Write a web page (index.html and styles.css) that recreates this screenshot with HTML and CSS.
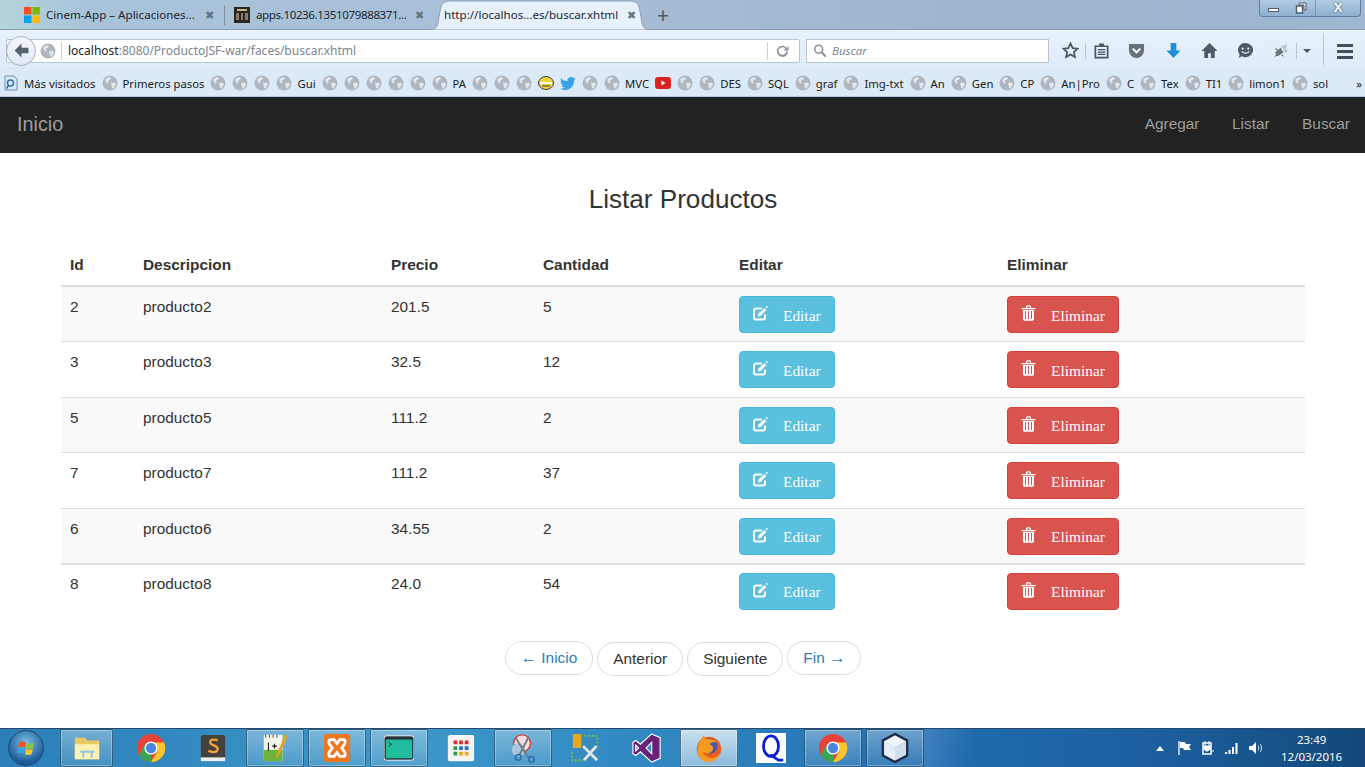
FILE: index.html
```html
<!DOCTYPE html>
<html lang="en">
<head>
    <meta charset="UTF-8">
    <meta name="viewport" content="width=device-width, initial-scale=1.0">
    <title>Listar Productos</title>
    <link rel="stylesheet" href="styles.css">
</head>
<body>
    <svg class="defs" width="0" height="0">
        <symbol id="globe" viewBox="0 0 16 16">
            <circle cx="8" cy="8" r="7.5" fill="#aeb6c0"/>
            <path d="M3 4.5 6.5 2l2.5 1-1 2-2 .5.5 2.5-1.5.5-1-1.5zM9 8l3.5-.5 1.5 2-2.5 4-1.5-.5-.5-3z" fill="#e3e7ec"/>
        </symbol>
        <symbol id="chrome" viewBox="0 0 32 32">
            <circle cx="16" cy="16" r="15" fill="#e8433a"/>
            <path d="M16 16 3 23.500A15 15 0 0 1 3 8.500z" fill="#e8433a"/>
            <path d="M16 16 16 31A15 15 0 0 1 3 23.500L9 13z" fill="#3aa655"/>
            <path d="M16 10H30A15 15 0 0 1 16 31L23 19z" fill="#fbc62e"/>
            <circle cx="16" cy="16" r="7" fill="#fff"/>
            <circle cx="16" cy="16" r="5.500" fill="#4a86e0"/>
        </symbol>
        <symbol id="edit" viewBox="0 0 15 16">
            <path d="M12 9.500v3a2 2 0 0 1-2 2H3a2 2 0 0 1-2-2v-7a2 2 0 0 1 2-2h6" fill="none" stroke="#fff" stroke-width="2"/>
            <path d="M5 11.500 5.500 8.500 11.500 3 13.500 5 7.500 11z" fill="#fff"/>
            <path d="M12.500 1.500 13.500 .8 15 2.300 14.300 3.300z" fill="#fff"/>
        </symbol>
        <symbol id="trash" viewBox="0 0 14 16">
            <path d="M0 3h14v1.300H0zM4.500 3V1.200L5.500.3h3l1 .9V3H8.300V1.500H5.700V3z" fill="#fff"/>
            <path d="M1.500 5h11v9.500l-1 1.200h-9l-1-1.200zM3.500 6v8h1V6zm3 0v8h1V6zm3 0v8h1V6z" fill="#fff" fill-rule="evenodd"/>
        </symbol>
    </svg>

    <div class="screen">
        <div class="tabbar">
            <div class="tab tab-first">
                <svg class="tab-icon" viewBox="0 0 16 16"><path fill="#f25022" d="M0 0h7.500v7.500H0z"/><path fill="#7fba00" d="M8.500 0H16v7.500H8.500z"/><path fill="#00a4ef" d="M0 8.500h7.500V16H0z"/><path fill="#ffb900" d="M8.500 8.500H16V16H8.500z"/></svg>
                <span class="tab-title">Cinem-App – Aplicaciones...</span>
                <span class="tab-close">✖</span>
            </div>
            <div class="tab tab-second">
                <svg class="tab-icon" viewBox="0 0 16 16"><path fill="#2c2622" d="M0 0h16v16H0z"/><path fill="#8a7a66" d="M2 6h3v7H2zM7 6h2v7H7zM11 6h3v7h-3z"/><path fill="#c9b48f" d="M3 2h10v2H3z"/></svg>
                <span class="tab-title">apps.10236.1351079888371...</span>
                <span class="tab-close">✖</span>
            </div>
            <div class="tab tab-active">
                <svg class="tab-shape" viewBox="0 0 228 30" preserveAspectRatio="none"><path d="M0 30C8 30 9 26 10 18L12 8C13 3 16 1 22 1H206C212 1 215 3 216 8L218 18C219 26 220 30 228 30z" fill="#e7f1fb" stroke="#8d9cab"/></svg>
                <span class="tab-title">http://localhos...es/buscar.xhtml</span>
                <span class="tab-close">✖</span>
            </div>
            <span class="tab-new">+</span>
            <div class="win-controls">
                <span class="win-btn win-min"><i></i></span>
                <span class="win-btn win-max">
                    <svg viewBox="0 0 12 12"><path d="M4 1h7v7H9V3H4z" fill="#fff" stroke="#4c5d70"/><path d="M1.500 4h6v7h-6z" fill="#fff" stroke="#4c5d70" stroke-width="1.400"/></svg>
                </span>
                <span class="win-btn win-close">X</span>
            </div>
        </div>

        <div class="toolbar">
            <div class="urlbar">
                <span class="back-btn">
                    <svg viewBox="0 0 16 16"><path d="M8 1.500 1.500 8 8 14.500V10.500h6.500v-5H8z" fill="#55626f"/></svg>
                </span>
                <svg class="globe url-globe"><use href="#globe"/></svg>
                <span class="url-text"><b>localhost</b>:8080/ProductoJSF-war/faces/buscar.xhtml</span>
                <span class="reload">
                    <svg viewBox="0 0 16 16"><path d="M13 5.500A6 6 0 1 0 14 9h-2.200A4 4 0 1 1 11 6.200L9 8h5.500V2.500z" fill="#8d96a0"/></svg>
                </span>
            </div>
            <div class="searchbar">
                <svg class="search-icon" viewBox="0 0 16 16"><circle cx="6.500" cy="6.500" r="4.500" fill="none" stroke="#8a929b" stroke-width="1.800"/><path d="m10 10 4.500 5" stroke="#8a929b" stroke-width="2.400"/></svg>
                <span class="search-text">Buscar</span>
            </div>
            <div class="tools">
                <svg class="tool tool-star" viewBox="0 0 18 18"><path d="m9 1.500 2.300 5 5.200.6-3.900 3.600 1.100 5.300L9 13.300 4.300 16l1.100-5.300L1.500 7.100l5.200-.6z" fill="none" stroke="#4a5561" stroke-width="1.800"/></svg>
                <i class="tool-sep sep-star"></i>
                <svg class="tool tool-clip" viewBox="0 0 18 18"><path d="M2.500 4.500h13v12h-13z" fill="none" stroke="#4a5561" stroke-width="1.800"/><path d="M6.500 1.500h5v3h-5zM5 7.500h8v1.300H5zM5 10h8v1.300H5zM5 12.500h8v1.300H5z" fill="#4a5561"/></svg>
                <svg class="tool tool-pocket" viewBox="0 0 18 18"><path d="M1 2h16v7a8 8 0 0 1-16 0z" fill="#66717d"/><path d="m5 7 4 4 4-4" fill="none" stroke="#fff" stroke-width="2.200"/></svg>
                <svg class="tool tool-down" viewBox="0 0 18 18"><path d="M6 1h6v8h4.500L9 17 1.500 9H6z" fill="#1c8fdc"/></svg>
                <svg class="tool tool-home" viewBox="0 0 18 18"><path d="M9 1 .5 9.500h3V17h4v-5h3v5h4V9.500h3z" fill="#4f5a66"/></svg>
                <svg class="tool tool-smile" viewBox="0 0 18 18"><path d="M9 1a8 7.500 0 1 1-4 14l-3 2 .8-3.800A7.500 7.500 0 0 1 9 1z" fill="#4f5a66"/><circle cx="6" cy="7" r="1.200" fill="#e6f0fa"/><circle cx="12" cy="7" r="1.200" fill="#e6f0fa"/><path d="M5 10c2 2.500 6 2.500 8 0" fill="none" stroke="#e6f0fa" stroke-width="1.300"/></svg>
                <svg class="tool tool-bee" viewBox="0 0 18 18"><path d="M2 11 8 6l3 5-6 4z" fill="#6d757f"/><path d="m8 5 7-3-2 7zM10 9l6-1-2 4z" fill="#bcc5ce"/><path d="M1 16l3-3 1 1zM4 9 2 6l3 2zM10 13l1 3-2-2z" fill="#4b535c"/></svg>
                <i class="tool-sep sep-bee"></i>
                <i class="tool-caret"></i>
                <i class="tool-sep sep-menu"></i>
                <span class="tool-menu"><i></i><i></i><i></i></span>
            </div>
        </div>

        <div class="bookmarks">
            <svg class="bm-folder" viewBox="0 0 16 16"><path d="M2 1h9l3 3v11H2z" fill="#d9e9f7" stroke="#6d93b8"/><circle cx="7.500" cy="8" r="3" fill="none" stroke="#2f6fb0" stroke-width="1.500"/><path d="m5.500 10.500-2 3" stroke="#2f6fb0" stroke-width="1.600"/></svg>
            <span class="bm-label bm-first">Más visitados</span>
            <span class="bm"><svg class="globe"><use href="#globe"/></svg>Primeros pasos</span>
            <span class="bm"><svg class="globe"><use href="#globe"/></svg></span>
            <span class="bm"><svg class="globe"><use href="#globe"/></svg></span>
            <span class="bm"><svg class="globe"><use href="#globe"/></svg></span>
            <span class="bm"><svg class="globe"><use href="#globe"/></svg>Gui</span>
            <span class="bm"><svg class="globe"><use href="#globe"/></svg></span>
            <span class="bm"><svg class="globe"><use href="#globe"/></svg></span>
            <span class="bm"><svg class="globe"><use href="#globe"/></svg></span>
            <span class="bm"><svg class="globe"><use href="#globe"/></svg></span>
            <span class="bm"><svg class="globe"><use href="#globe"/></svg></span>
            <span class="bm"><svg class="globe"><use href="#globe"/></svg>PA</span>
            <span class="bm"><svg class="globe"><use href="#globe"/></svg></span>
            <span class="bm"><svg class="globe"><use href="#globe"/></svg></span>
            <span class="bm"><svg class="globe"><use href="#globe"/></svg></span>
            <span class="bm"><svg class="globe" viewBox="0 0 16 16"><ellipse cx="8" cy="8" rx="7.500" ry="6.500" fill="#f1d13c" stroke="#39424d"/><path d="M2 7h12v2H2z" fill="#fff"/><path d="M4 11h8" stroke="#39424d"/></svg></span>
            <span class="bm"><svg class="globe" viewBox="0 0 16 16"><path d="M15.500 3.500c-.6.300-1.200.4-1.800.5.700-.4 1.100-1 1.400-1.700-.6.400-1.300.6-2 .8a3.200 3.200 0 0 0-5.500 2.900C5 6.400 2.700 5.200 1.100 3.200c-.8 1.500-.4 3.300 1 4.300-.5 0-1-.2-1.400-.4 0 1.600 1.100 2.900 2.600 3.200-.5.100-1 .2-1.500.1.400 1.300 1.600 2.200 3 2.200A6.500 6.500 0 0 1 0 13.500 9.100 9.100 0 0 0 14.100 5.400c.6-.5 1-1.100 1.400-1.900z" fill="#35a2ea"/></svg></span>
            <span class="bm"><svg class="globe"><use href="#globe"/></svg></span>
            <span class="bm"><svg class="globe"><use href="#globe"/></svg>MVC</span>
            <span class="bm"><svg class="globe" viewBox="0 0 16 16"><rect y="2" width="16" height="12" rx="3" fill="#d9231f"/><path d="m6.500 5.500 4 2.500-4 2.500z" fill="#fff"/></svg></span>
            <span class="bm"><svg class="globe"><use href="#globe"/></svg></span>
            <span class="bm"><svg class="globe"><use href="#globe"/></svg>DES</span>
            <span class="bm"><svg class="globe"><use href="#globe"/></svg>SQL</span>
            <span class="bm"><svg class="globe"><use href="#globe"/></svg>graf</span>
            <span class="bm"><svg class="globe"><use href="#globe"/></svg>Img-txt</span>
            <span class="bm"><svg class="globe"><use href="#globe"/></svg>An</span>
            <span class="bm"><svg class="globe"><use href="#globe"/></svg>Gen</span>
            <span class="bm"><svg class="globe"><use href="#globe"/></svg>CP</span>
            <span class="bm"><svg class="globe"><use href="#globe"/></svg>An|Pro</span>
            <span class="bm"><svg class="globe"><use href="#globe"/></svg>C</span>
            <span class="bm"><svg class="globe"><use href="#globe"/></svg>Tex</span>
            <span class="bm"><svg class="globe"><use href="#globe"/></svg>TI1</span>
            <span class="bm"><svg class="globe"><use href="#globe"/></svg>limon1</span>
            <span class="bm"><svg class="globe"><use href="#globe"/></svg>sol</span>
            <span class="bm-more">»</span>
        </div>

        <nav class="navbar">
            <a class="brand">Inicio</a>
            <ul class="nav-links">
                <li>Agregar</li>
                <li>Listar</li>
                <li>Buscar</li>
            </ul>
        </nav>

        <main class="content">
            <h2>Listar Productos</h2>
            <table>
                <thead>
                    <tr>
                        <th class="col-id">Id</th>
                        <th class="col-desc">Descripcion</th>
                        <th class="col-price">Precio</th>
                        <th class="col-qty">Cantidad</th>
                        <th class="col-edit">Editar</th>
                        <th>Eliminar</th>
                    </tr>
                </thead>
                <tbody>
                    <tr>
                        <td>2</td><td>producto2</td><td>201.5</td><td>5</td>
                        <td><a class="btn btn-info"><svg class="btn-icon"><use href="#edit"/></svg>Editar</a></td>
                        <td><a class="btn btn-danger"><svg class="btn-icon"><use href="#trash"/></svg>Eliminar</a></td>
                    </tr>
                    <tr>
                        <td>3</td><td>producto3</td><td>32.5</td><td>12</td>
                        <td><a class="btn btn-info"><svg class="btn-icon"><use href="#edit"/></svg>Editar</a></td>
                        <td><a class="btn btn-danger"><svg class="btn-icon"><use href="#trash"/></svg>Eliminar</a></td>
                    </tr>
                    <tr>
                        <td>5</td><td>producto5</td><td>111.2</td><td>2</td>
                        <td><a class="btn btn-info"><svg class="btn-icon"><use href="#edit"/></svg>Editar</a></td>
                        <td><a class="btn btn-danger"><svg class="btn-icon"><use href="#trash"/></svg>Eliminar</a></td>
                    </tr>
                    <tr>
                        <td>7</td><td>producto7</td><td>111.2</td><td>37</td>
                        <td><a class="btn btn-info"><svg class="btn-icon"><use href="#edit"/></svg>Editar</a></td>
                        <td><a class="btn btn-danger"><svg class="btn-icon"><use href="#trash"/></svg>Eliminar</a></td>
                    </tr>
                    <tr>
                        <td>6</td><td>producto6</td><td>34.55</td><td>2</td>
                        <td><a class="btn btn-info"><svg class="btn-icon"><use href="#edit"/></svg>Editar</a></td>
                        <td><a class="btn btn-danger"><svg class="btn-icon"><use href="#trash"/></svg>Eliminar</a></td>
                    </tr>
                </tbody>
                <tbody class="last-body">
                    <tr>
                        <td>8</td><td>producto8</td><td>24.0</td><td>54</td>
                        <td><a class="btn btn-info"><svg class="btn-icon"><use href="#edit"/></svg>Editar</a></td>
                        <td><a class="btn btn-danger"><svg class="btn-icon"><use href="#trash"/></svg>Eliminar</a></td>
                    </tr>
                </tbody>
            </table>
            <div class="pager">
                <a class="pill pill-link"><span class="arrow">←</span> Inicio</a>
                <a class="pill">Anterior</a>
                <a class="pill">Siguiente</a>
                <a class="pill pill-link">Fin <span class="arrow">→</span></a>
            </div>
        </main>

        <footer class="taskbar">
            <span class="start-orb">
                <svg viewBox="0 0 20 20"><path fill="#f25022" d="M3 4c2-1 4-1 6.500 0l-1 5C6 8 4.500 8 2 9z"/><path fill="#8cc63f" d="M10.500 4.500c2 1 4 1 6.500 0l-1 5c-2 1-4 1-6.500 0z"/><path fill="#35a7e8" d="M2 10c2-1 4-1 6.500 0l-1 5c-2-1-4-1-6.500 0z"/><path fill="#fcc419" d="M9.500 10.500c2 1 4 1 6.500 0l-1 5c-2 1-4 1-6.500 0z"/></svg>
            </span>
            <span class="task task-explorer active">
                <svg viewBox="0 0 32 32"><path d="M3 5h11l2 3h13v20H3z" fill="#e8c964"/><path d="M3 12h26v16H3z" fill="#fdf0b6"/><path d="M9 19h15v2H9zM11 21h2v5h-2zM20 21h2v5h-2z" fill="#8ac6e6"/></svg>
            </span>
            <div class="task-group">
                <span class="task"><svg viewBox="0 0 32 32"><use href="#chrome"/></svg></span>
                <span class="task"><svg viewBox="0 0 32 32"><rect x="3" y="2" width="26" height="26" rx="3" fill="#45423e"/><path d="M3 26h26v4H3z" fill="#eee"/><path d="M21 8c-4-2-8-1-8 2s8 3 8 7-6 4-10 2" fill="none" stroke="#f5a13c" stroke-width="2.400"/></svg></span>
                <span class="task active"><svg viewBox="0 0 32 32"><path d="M4 2h20v28H4z" fill="#f2f6ea"/><path d="M4 18h20v12H4z" fill="#6fb43a"/><path d="M6 2v3M10 2v3M14 2v3M18 2v3" stroke="#444"/><path d="m27 1-9 21-2 5 4-3L30 3z" fill="#e8a420"/><path d="M9 10v9M13 14h5M15.500 11.500v5" stroke="#222" stroke-width="1.200"/></svg></span>
                <span class="task active"><svg viewBox="0 0 32 32"><rect x="2" y="1" width="28" height="30" rx="3" fill="#f0761f"/><path d="M9 7h4l3 4 3-4h4c2 0 2 3 1 5l-3 4 3 4c1 2 1 5-1 5h-4l-3-4-3 4H9c-2 0-2-3-1-5l3-4-3-4c-1-2-1-5 1-5z" fill="none" stroke="#fff" stroke-width="3"/></svg></span>
                <span class="task active"><svg viewBox="0 0 32 32"><rect x="1" y="4" width="30" height="24" rx="2" fill="#1fbd9d" stroke="#25323e" stroke-width="2"/><path d="M1 4h30v3H1z" fill="#25323e"/><path d="m5 10 3 2-3 2" fill="none" stroke="#25323e"/><rect x="0" y="3" width="32" height="26" rx="3" fill="none" stroke="#fff"/></svg></span>
                <span class="task"><svg viewBox="0 0 32 32"><rect x="2" y="2" width="28" height="28" rx="2" fill="#f4f4f2"/><path fill="#e32a2a" d="M8 8h4v4H8zM14 8h4v4h-4zM20 8h4v4h-4z"/><path fill="#2c9a4c" d="M8 14h4v4H8zM8 20h4v4H8z"/><path fill="#1f74d6" d="M14 14h4v4h-4zM20 14h4v4h-4z"/><path fill="#f5a511" d="M14 20h4v4h-4zM20 20h4v4h-4z"/></svg></span>
                <span class="task active"><svg viewBox="0 0 32 32"><circle cx="15" cy="11" r="9" fill="#f2dfe0" stroke="#d63a3a" stroke-width="1.500"/><circle cx="11" cy="18" r="7" fill="#a9c7de"/><path d="m8 5 15 23M22 4 12 24" stroke="#6f7a85" stroke-width="2"/><circle cx="11" cy="26" r="3" fill="none" stroke="#2f6fb0" stroke-width="1.600"/><circle cx="25" cy="28" r="3" fill="none" stroke="#2f6fb0" stroke-width="1.600"/></svg></span>
                <span class="task"><svg viewBox="0 0 32 32"><rect x="3" y="1" width="9" height="15" rx="1" fill="#e5a81d"/><path d="M15 3h14v12M2 20v9h12" fill="none" stroke="#7dc23b" stroke-width="2" stroke-dasharray="2 2"/><path d="m14 14 15 15M28 14 15 29" stroke="#e6e6e6" stroke-width="3"/></svg></span>
                <span class="task"><svg viewBox="0 0 32 32"><path d="M21 1 30 5v22l-9 4-12-11-5 4-3-2V10l3-2 5 4zM21 10l-6 6 6 6zM4 13v6l3-3z" fill="#68217a" stroke="#fff" stroke-width="1.200" fill-rule="evenodd"/></svg></span>
                <span class="task active task-fox"><svg viewBox="0 0 32 32"><circle cx="16" cy="17" r="13" fill="#e85c1c"/><circle cx="17" cy="14" r="8" fill="#4a57a8"/><path d="M4 20C4 10 8 5 11 2c0 3 1 4 3 5 3-1 8 0 11 3-4-1-7 0-8 2 2 1 4 3 3 6-2 4-7 5-11 2 2 5 8 8 13 6 3-1 5-3 6-6-1 7-7 11-13 11C9 31 4 26 4 20z" fill="#f59a23"/></svg></span>
                <span class="task"><svg viewBox="0 0 32 32"><path d="M0 0h32v32H0z" fill="#fff"/><ellipse cx="16" cy="14" rx="8" ry="11" fill="none" stroke="#0a1fd6" stroke-width="3"/><path d="m15 23 9 6h5" fill="none" stroke="#0a1fd6" stroke-width="3"/></svg></span>
                <span class="task active"><svg viewBox="0 0 32 32"><use href="#chrome"/></svg></span>
                <span class="task active"><svg viewBox="0 0 32 32"><path d="M16 1 29 8v16l-13 7-13-7V8z" fill="#cfe0ea" stroke="#1f2a44" stroke-width="2.400"/><path d="M16 3 27 9l-11 5L5 9z" fill="#eef5f8"/><path d="M16 14v15L5 23V9z" fill="#e4eef4"/></svg></span>
            </div>
            <div class="tray">
                <i class="tray-arrow"></i>
                <svg class="tray-icon" viewBox="0 0 16 16"><path d="M3 1v14" stroke="#fff" stroke-width="1.300"/><path d="M4 2h5l1 2h5l-2 3 2 3H8L7 8H4z" fill="#fff"/></svg>
                <svg class="tray-icon" viewBox="0 0 16 16"><path d="M3 3h8v11H3z" fill="none" stroke="#fff" stroke-width="1.500"/><path d="M5 1v5M9 1v5M4 6h6v3l-2 2H6L4 9zM11 11h3" stroke="#fff" fill="#fff"/></svg>
                <svg class="tray-icon" viewBox="0 0 16 16"><path fill="#fff" d="M1 12h2v2H1zM4.500 10h2v4h-2zM8 7h2v7H8zM11.500 3h2v11h-2z"/></svg>
                <svg class="tray-icon" viewBox="0 0 16 16"><path fill="#fff" d="M1 6h3l4-4v12l-4-4H1z"/><path d="M10 5.500c1 1.500 1 3.500 0 5M12 4c2 2 2 6 0 8" fill="none" stroke="#dbe8f4"/></svg>
                <div class="clock"><span>23:49</span><span>12/03/2016</span></div>
            </div>
        </footer>
    </div>
</body>
</html>
```

FILE: styles.css
```css
* {
    box-sizing: border-box;
}
body {
    margin: 0;
    font-family: "Liberation Sans", Arial, sans-serif;
    color: #333;
    background: #fff;
}
.defs {
    position: absolute;
}
.screen {
    display: flex;
    flex-direction: column;
    width: 1365px;
    height: 767px;
    overflow: hidden;
}

/* browser tabs */
.tabbar {
    display: flex;
    align-items: center;
    flex: none;
    height: 30px;
    padding-left: 14px;
    font-family: "Noto Sans", sans-serif;
    font-size: 11.600px;
    color: #1c2733;
    background: linear-gradient(90deg, #b5d4dc 0, #a9c4da 6%, #a6bdd5 45%, #9db4cd 75%, #9fb7d1 100%);
    border-bottom: 1px solid #8d9cab;
}
.tab {
    position: relative;
    display: flex;
    align-items: center;
    flex: none;
    height: 29px;
    padding-left: 10px;
}
.tab-first, .tab-second {
    width: 210px;
}
.tab-second::before {
    content: "";
    position: absolute;
    left: 0;
    top: 5px;
    height: 20px;
    border-left: 1px solid #7f8fa0;
}
.tab-second .tab-title {
    letter-spacing: -0.4px;
}
.tab-active {
    width: 214px;
}
.tab-shape {
    position: absolute;
    left: -5px;
    top: 0;
    width: 222px;
    height: 30px;
}
.tab-icon {
    flex: none;
    width: 16px;
    height: 16px;
    margin-right: 6px;
}
.tab-title {
    position: relative;
    flex: 0 0 150px;
    white-space: nowrap;
}
.tab-active .tab-title {
    flex-basis: 172px;
}
.tab-close {
    position: relative;
    margin-left: 9px;
    font-size: 11px;
    color: #66727f;
}
.tab-new {
    margin-left: 9px;
    font-size: 21px;
    color: #4f5a66;
}
.win-controls {
    display: flex;
    align-self: flex-start;
    margin-left: auto;
    margin-right: 4px;
    height: 17px;
    border: 1px solid #5e7fa3;
    border-top: 0;
    border-radius: 0 0 4px 4px;
    background: linear-gradient(#b3cbe2, #8eafd0);
}
.win-btn {
    display: flex;
    align-items: center;
    justify-content: center;
    height: 16px;
}
.win-min {
    width: 26px;
}
.win-min i {
    width: 11px;
    height: 4px;
    margin-top: 4px;
    background: #fff;
    border: 1px solid #4c5d70;
}
.win-max {
    width: 30px;
    border-right: 1px solid #7d9dbf;
}
.win-max svg {
    width: 12px;
    height: 12px;
}
.win-close {
    width: 44px;
    font-family: "Liberation Sans", sans-serif;
    font-size: 13px;
    line-height: 16px;
    font-weight: bold;
    color: #fff;
    text-shadow: 0 0 2px #334;
}

/* address row */
.toolbar {
    display: flex;
    align-items: center;
    flex: none;
    height: 37px;
    padding: 4px 0 0 6px;
    background: linear-gradient(#e8f2fc, #dfebf8);
}
.urlbar {
    position: relative;
    display: flex;
    align-items: center;
    width: 794px;
    height: 24px;
    padding-left: 33px;
    background: #fff;
    border: 1px solid #b6c4d3;
    border-radius: 2px;
    font-family: "Noto Sans", sans-serif;
    font-size: 12px;
    color: #7c8590;
}
.urlbar b {
    font-weight: normal;
    color: #222;
}
.back-btn {
    position: absolute;
    left: -1px;
    top: -4px;
    display: flex;
    align-items: center;
    justify-content: center;
    width: 30px;
    height: 30px;
    background: linear-gradient(#f6f9fd, #dfe8f2);
    border: 1px solid #a3b1c0;
    border-radius: 50%;
}
.back-btn svg {
    width: 17px;
    height: 17px;
}
.globe {
    flex: none;
    width: 16px;
    height: 16px;
}
.url-globe {
    margin-right: 5px;
}
.url-text {
    padding-left: 6px;
    border-left: 1px solid #c8d0d9;
    line-height: 18px;
}
.reload {
    display: flex;
    align-items: center;
    height: 18px;
    margin-left: auto;
    padding: 0 9px 0 7px;
    border-left: 1px solid #c8d0d9;
}
.reload svg {
    width: 15px;
    height: 15px;
}
.searchbar {
    display: flex;
    align-items: center;
    width: 243px;
    height: 24px;
    margin-left: 6px;
    padding-left: 6px;
    background: #fff;
    border: 1px solid #b6c4d3;
    font-family: "Noto Sans", sans-serif;
    font-size: 11.500px;
    font-style: italic;
    color: #7c8590;
}
.search-icon {
    width: 14px;
    height: 15px;
    margin-right: 5px;
}
.tools {
    position: relative;
    flex: 1;
    height: 33px;
}
.tool {
    position: absolute;
    top: 8px;
    width: 17px;
    height: 17px;
}
.tool-star { left: 13px; }
.tool-clip { left: 44px; }
.tool-pocket { left: 79px; }
.tool-down { left: 116px; }
.tool-home { left: 152px; }
.tool-smile { left: 188px; }
.tool-bee { left: 224px; }
.tool-sep {
    position: absolute;
    top: 9px;
    height: 16px;
    border-left: 1px solid #b9c6d4;
}
.sep-star { left: 36px; }
.sep-bee { left: 247px; }
.sep-menu { left: 274px; top: -1px; height: 32px; }
.tool-caret {
    position: absolute;
    left: 254px;
    top: 15px;
    border: 4px solid transparent;
    border-top-color: #4f5a66;
}
.tool-menu {
    position: absolute;
    left: 288px;
    top: 10px;
    display: flex;
    flex-direction: column;
    gap: 3px;
}
.tool-menu i {
    width: 16px;
    height: 3px;
    background: #434e59;
}

/* bookmarks */
.bookmarks {
    display: flex;
    align-items: center;
    flex: none;
    gap: 6px;
    height: 30px;
    padding: 3px 0 0 3px;
    font-family: "Noto Sans", sans-serif;
    font-size: 11.300px;
    color: #1a1a1a;
    white-space: nowrap;
    background: #dce9f7;
    border-bottom: 1px solid #b7c6d6;
}
.bm-folder {
    width: 16px;
    height: 16px;
}
.bm-first {
    margin-left: -1px;
}
.bm {
    display: flex;
    align-items: center;
    gap: 5px;
}
.bm-more {
    margin-left: auto;
    margin-right: 3px;
}

/* page navbar */
.navbar {
    display: flex;
    align-items: center;
    justify-content: space-between;
    flex: none;
    height: 56px;
    padding: 0 15px 2px 17px;
    background: #222;
    color: #9d9d9d;
    font-size: 15.400px;
}
.brand {
    font-size: 19.800px;
}
.nav-links {
    display: flex;
    gap: 32.500px;
    margin: 0;
    padding: 0;
    list-style: none;
}

/* page content */
.content {
    flex: 1;
    padding: 0 60px 0 61px;
    font-size: 15.400px;
}
h2 {
    margin: 29px 0 29px;
    font-size: 26.100px;
    font-weight: normal;
    line-height: 34px;
    text-align: center;
}
table {
    width: 100%;
    border-collapse: collapse;
    table-layout: fixed;
}
th, td {
    padding: 9px;
    text-align: left;
    vertical-align: top;
    line-height: 22px;
}
th {
    border-bottom: 2px solid #ddd;
}
td {
    height: 55.500px;
    padding-bottom: 8px;
    border-top: 1px solid #ddd;
}
tbody tr:first-child td {
    border-top: 0;
}
tbody tr:nth-child(odd) td {
    background: #f9f9f9;
}
.last-body tr td {
    padding-top: 8px;
    background: #fff !important;
    border-top: 2px solid #ddd !important;
}
.col-id { width: 73px; }
.col-desc { width: 248px; }
.col-price { width: 152px; }
.col-qty { width: 196px; }
.col-edit { width: 268px; }
.btn {
    display: inline-flex;
    align-items: center;
    gap: 15px;
    height: 37px;
    padding: 2px 13px 0;
    border: 1px solid;
    border-radius: 4px;
    font-family: "Liberation Serif", serif;
    font-size: 15.400px;
    color: #fff;
}
.btn-info {
    background: #5bc0de;
    border-color: #46b8da;
}
.btn-danger {
    background: #d9534f;
    border-color: #d43f3a;
}
.btn-icon {
    width: 15px;
    height: 16px;
    margin-top: -5px;
}
.pager {
    display: flex;
    justify-content: center;
    align-items: center;
    gap: 4px;
    margin-top: 23px;
}
.pill {
    height: 34px;
    padding: 0 15px;
    border: 1px solid #ddd;
    border-radius: 17px;
    line-height: 31px;
    background: #fff;
}
.pill-link {
    margin-top: -2px;
    color: #337ab7;
}
.arrow {
    font-size: 16.500px;
}

/* windows taskbar */
.taskbar {
    display: flex;
    flex: none;
    align-items: stretch;
    height: 39px;
    color: #fff;
    background: linear-gradient(90deg, #2a7fb8 0, #3d97c9 30%, #2f86c0 50%, #1f6cb0 68%, #1c5f9f 85%, #134878 100%);
    border-top: 1px solid #26486a;
}
.start-orb {
    display: flex;
    align-items: center;
    justify-content: center;
    flex: none;
    width: 36px;
    height: 36px;
    margin: 1px 16px 0 8px;
    border-radius: 50%;
    background: radial-gradient(circle at 50% 35%, #7cc0e6, #1c5c98 70%);
    border: 1px solid #20486e;
}
.start-orb svg {
    width: 21px;
    height: 21px;
}
.task {
    display: flex;
    align-items: center;
    justify-content: center;
    flex: none;
    width: 58px;
    height: 38px;
}
.task svg {
    width: 30px;
    height: 30px;
}
.task.active {
    background: linear-gradient(rgba(255, 255, 255, 0.35), rgba(255, 255, 255, 0.1));
    border: 1px solid rgba(25, 60, 90, 0.65);
    box-shadow: inset 0 0 0 1px rgba(255, 255, 255, 0.3);
    border-radius: 2px;
}
.task-fox {
    background: linear-gradient(rgba(255, 255, 255, 0.75), rgba(255, 255, 255, 0.45)) !important;
}
.task-explorer {
    width: 53px;
    margin-right: 9px;
}
.task-group {
    display: flex;
    gap: 4px;
}
.tray {
    display: flex;
    align-items: center;
    flex: 1;
    gap: 8px;
    padding-left: 232px;
    background: linear-gradient(100deg, rgba(255, 255, 255, 0.14) 0, transparent 12%);
}
.tray-arrow {
    margin-right: 4px;
    border: 4px solid transparent;
    border-top: 0;
    border-bottom: 5px solid #fff;
}
.tray-icon {
    width: 16px;
    height: 16px;
}
.clock {
    display: flex;
    flex-direction: column;
    align-items: center;
    gap: 2px;
    margin-left: 9px;
    font-family: "Noto Sans", sans-serif;
    font-size: 11.500px;
    line-height: 15px;
}
```
